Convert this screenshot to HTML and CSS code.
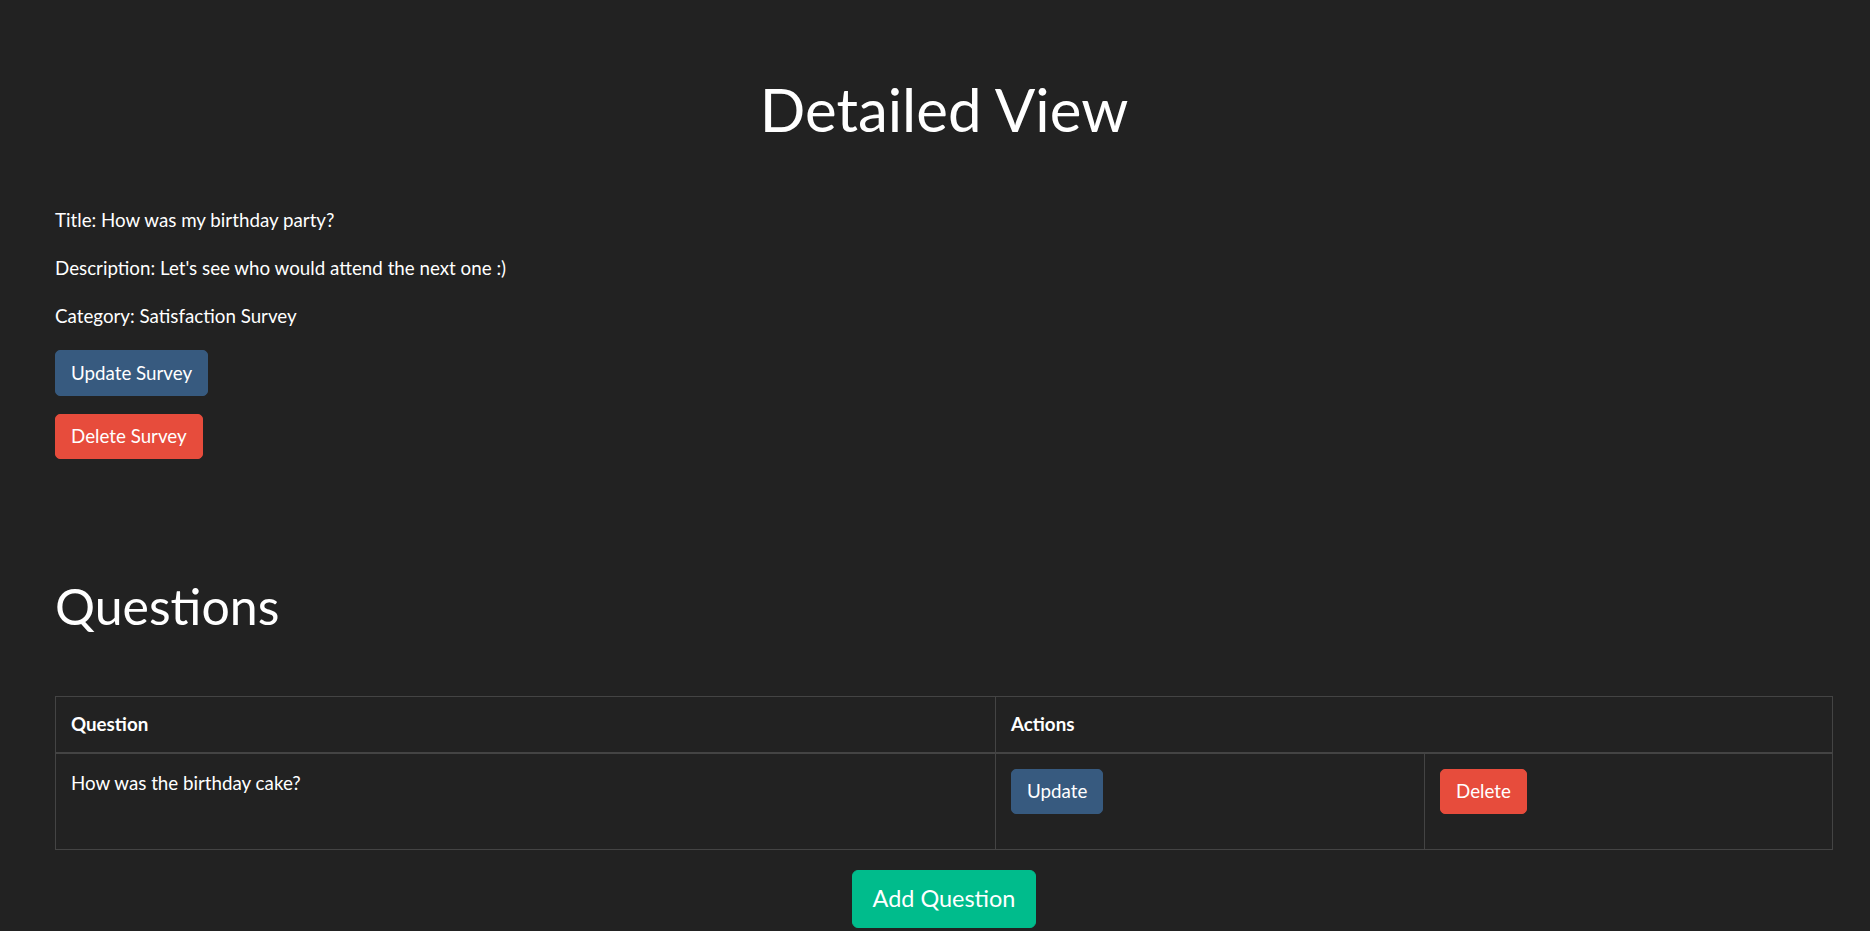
FILE: index.html
```html
<!DOCTYPE html>
<html lang="en">
<head>
<meta charset="utf-8">
<title>Detailed View</title>
<link rel="stylesheet" href="styles.css">
</head>
<body>
<div class="page">
  <h1 class="page-title">Detailed View</h1>
  <p class="info">Title: How was my birthday party?</p>
  <p class="info">Description: Let's see who would attend the next one :)</p>
  <p class="info">Category: Satisfaction Survey</p>
  <div class="survey-actions">
    <button class="btn btn-primary">Update Survey</button>
    <button class="btn btn-danger">Delete Survey</button>
  </div>

  <h2 class="section-title">Questions</h2>
  <table class="table">
    <colgroup>
      <col class="col-question">
      <col class="col-update">
      <col class="col-delete">
    </colgroup>
    <thead>
      <tr>
        <th>Question</th>
        <th colspan="2">Actions</th>
      </tr>
    </thead>
    <tbody>
      <tr>
        <td>How was the birthday cake?</td>
        <td><form class="row-form"><button type="button" class="btn btn-primary">Update</button></form></td>
        <td><form class="row-form"><button type="button" class="btn btn-danger">Delete</button></form></td>
      </tr>
    </tbody>
  </table>
  <div class="add-wrap">
    <button class="btn btn-success btn-lg">Add Question</button>
  </div>
</div>
</body>
</html>
```

FILE: styles.css
```css
html, body {
  margin: 0;
  padding: 0;
}

body {
  background: #222222;
  color: #ffffff;
  font-family: Lato, "Open Sans", "Liberation Sans", sans-serif;
  font-size: 18.75px;
  line-height: 1.5;
}

.page {
  padding: 73px 37px 0 55px;
}

.page-title {
  margin: 0 0 61px;
  font-size: 60px;
  font-weight: 400;
  line-height: 1.2;
  text-align: center;
}

.info {
  margin: 0 0 20px;
}

.survey-actions {
  display: flex;
  flex-direction: column;
  align-items: flex-start;
  gap: 18px;
}

.section-title {
  margin: 117px 0 60px;
  font-size: 50px;
  font-weight: 400;
  line-height: 1.2;
}

.btn {
  display: inline-block;
  padding: 7.5px 15px;
  font-family: inherit;
  font-size: 18.75px;
  line-height: 1.5;
  color: #ffffff;
  border: 1px solid transparent;
  border-radius: 5px;
  cursor: pointer;
}

.btn-primary {
  background: #375a7f;
  border-color: #375a7f;
}

.btn-danger {
  background: #e74c3c;
  border-color: #e74c3c;
}

.btn-success {
  background: #00bc8c;
  border-color: #00bc8c;
}

.btn-lg {
  padding: 10.5px 20px;
  font-size: 23.44px;
  border-radius: 6px;
}

.table {
  width: 100%;
  table-layout: fixed;
  border-collapse: collapse;
  margin-bottom: 20px;
  color: #ffffff;
}

.col-question {
  width: 940px;
}

.col-update {
  width: 429px;
}

.table th,
.table td {
  border: 1px solid #444444;
  text-align: left;
  vertical-align: top;
}

.table th {
  padding: 13px 15px 14px;
  font-weight: 700;
  line-height: 28px;
  border-bottom-width: 2px;
}

.table td {
  padding: 15px;
}

.row-form {
  margin: 0 0 20px;
}

.add-wrap {
  text-align: center;
}
```
